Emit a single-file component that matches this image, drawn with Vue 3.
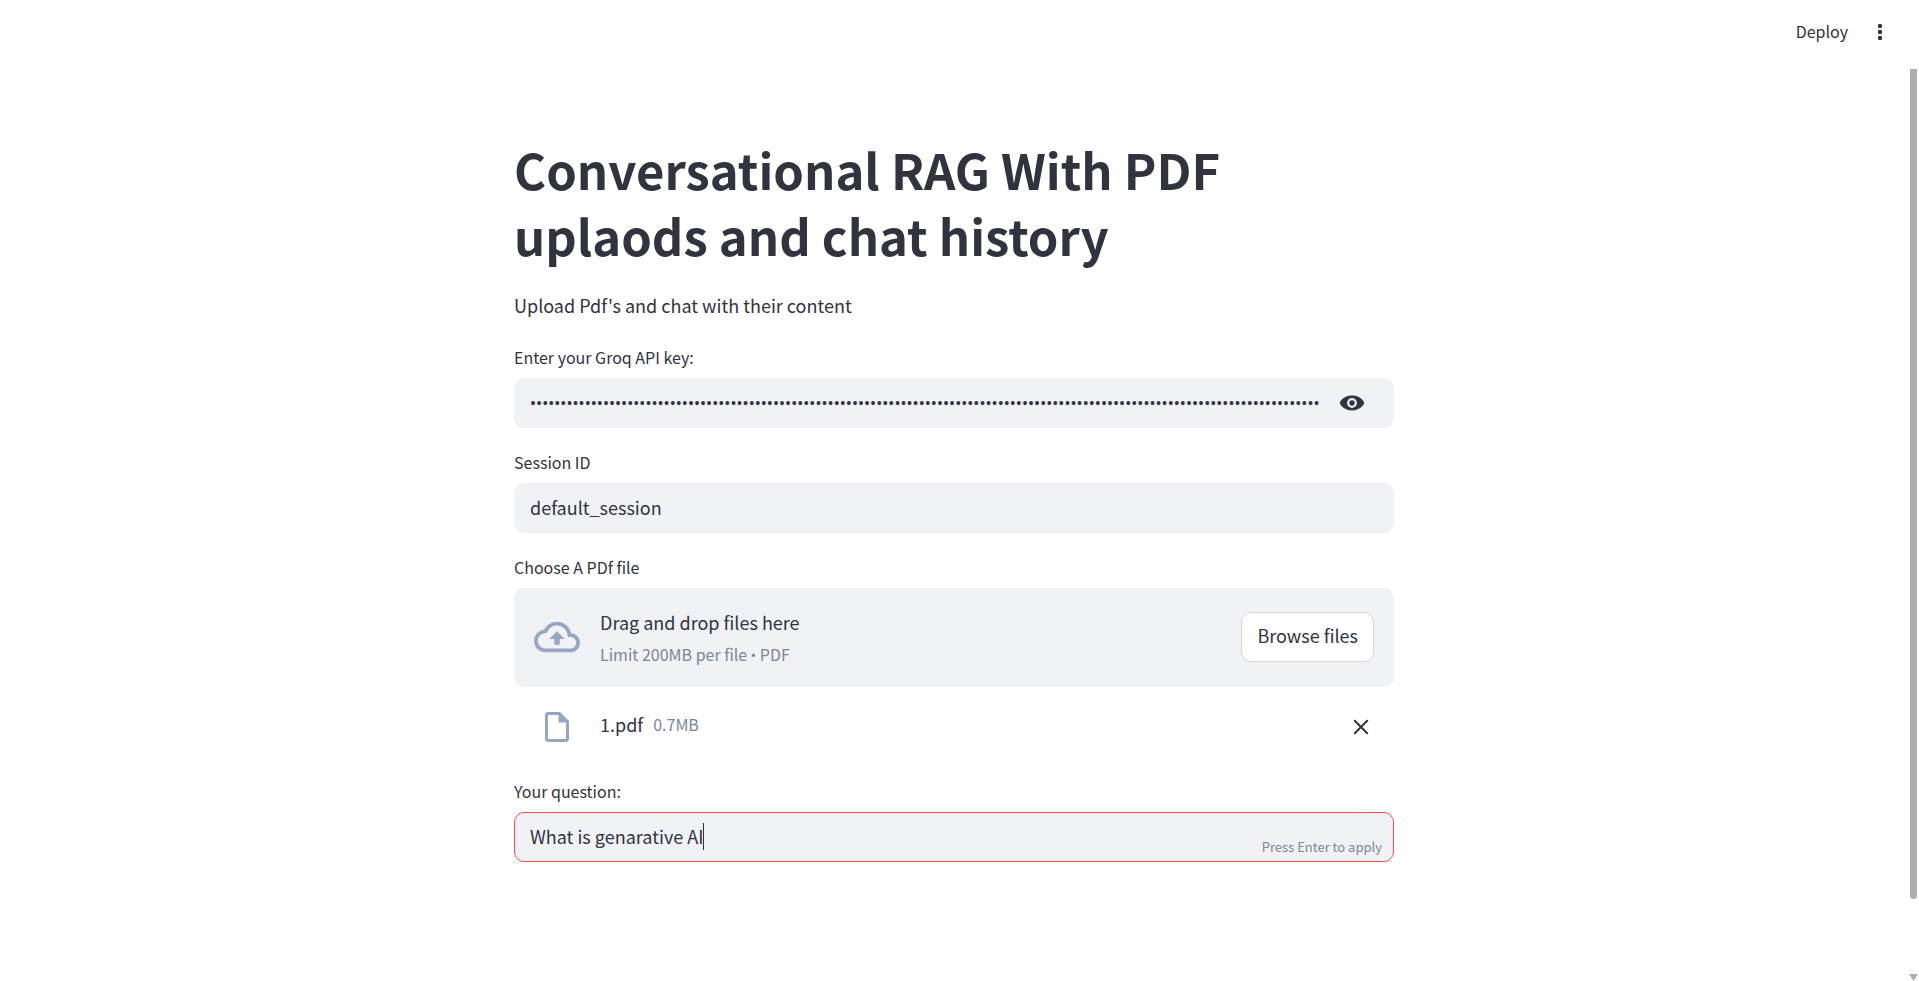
<script setup>
import { ref } from 'vue'

const apiKey = ref('k'.repeat(130))
const sessionId = ref('default_session')
const question = ref('What is genarative AI')
const files = ref([{ name: '1.pdf', size: '0.7MB' }])
const keyVisible = ref(false)

function removeFile(index) {
  files.value.splice(index, 1)
}
</script>

<template>
  <div class="app">
    <header class="toolbar">
      <button class="deploy" type="button">Deploy</button>
      <button class="menu" type="button" aria-label="Main menu">
        <svg width="20" height="20" viewBox="0 0 20 20">
          <circle cx="10" cy="4" r="2.2" />
          <circle cx="10" cy="10" r="2.2" />
          <circle cx="10" cy="16" r="2.2" />
        </svg>
      </button>
    </header>

    <main class="content">
      <h1>Conversational RAG With PDF uplaods and chat history</h1>
      <p class="intro">Upload Pdf's and chat with their content</p>

      <div class="group">
        <label for="api-key">Enter your Groq API key:</label>
        <div class="field">
          <input
            id="api-key"
            v-model="apiKey"
            class="secret"
            :type="keyVisible ? 'text' : 'password'"
            autocomplete="off"
          />
          <button class="reveal" type="button" aria-label="Show password text" @click="keyVisible = !keyVisible">
            <svg width="26" height="16" viewBox="0 0 26 16">
              <path
                fill-rule="evenodd"
                d="M13 .5C7.6.5 3.2 3.2 1.1 6.9a2.2 2.2 0 0 0 0 2.2C3.2 12.8 7.6 15.5 13 15.5s9.8-2.7 11.9-6.4a2.2 2.2 0 0 0 0-2.2C22.8 3.2 18.4.5 13 .5zM13 3.1a4.9 4.9 0 1 1 0 9.8 4.9 4.9 0 0 1 0-9.8z"
              />
              <circle cx="13" cy="8" r="2.7" />
            </svg>
          </button>
        </div>
      </div>

      <div class="group">
        <label for="session">Session ID</label>
        <div class="field">
          <input id="session" v-model="sessionId" type="text" />
        </div>
      </div>

      <div class="group">
        <label for="browse">Choose A PDf file</label>
        <section class="dropzone">
          <svg class="cloud" width="46" height="46" viewBox="0 0 24 24">
            <path
              d="M19.35 10.04A7.49 7.49 0 0 0 12 4C9.11 4 6.6 5.64 5.35 8.04A5.994 5.994 0 0 0 0 14c0 3.31 2.69 6 6 6h13c2.76 0 5-2.24 5-5 0-2.64-2.05-4.78-4.65-4.96zM19 18H6c-2.21 0-4-1.79-4-4 0-2.05 1.53-3.76 3.56-3.97l1.07-.11.5-.95A5.469 5.469 0 0 1 12 6c2.62 0 4.88 1.86 5.39 4.43l.3 1.5 1.53.11A2.98 2.98 0 0 1 22 15c0 1.65-1.35 3-3 3zM8 13h2.55v3h2.9v-3H16l-4-4z"
            />
          </svg>
          <div class="instructions">
            <span>Drag and drop files here</span>
            <span class="limit">Limit 200MB per file <span class="dot">•</span> PDF</span>
          </div>
          <button id="browse" class="browse" type="button">Browse files</button>
        </section>
        <ul class="files">
          <li v-for="(file, index) in files" :key="file.name">
            <svg class="sheet" width="36" height="36" viewBox="0 0 24 24">
              <path
                d="M14 2H6c-1.1 0-1.99.9-1.99 2L4 20c0 1.1.89 2 1.99 2H18c1.1 0 2-.9 2-2V8l-6-6zM6 20V4h7v5h5v11H6z"
              />
            </svg>
            <div class="file-info">
              <span>{{ file.name }}</span>
              <span class="file-size">{{ file.size }}</span>
            </div>
            <button class="remove" type="button" :aria-label="'Remove ' + file.name" @click="removeFile(index)">
              <svg width="16" height="16" viewBox="0 0 16 16">
                <path d="M1.8 1.8l12.4 12.4M14.2 1.8L1.8 14.2" />
              </svg>
            </button>
          </li>
        </ul>
      </div>

      <div class="group">
        <label for="question">Your question:</label>
        <div class="field active">
          <input id="question" v-model="question" type="text" />
          <span class="caret"></span>
          <span class="hint">Press Enter to apply</span>
        </div>
      </div>
    </main>

    <div class="rail" aria-hidden="true">
      <div class="thumb"></div>
      <div class="arrow"></div>
    </div>
  </div>
</template>

<style>
body {
  background: #fff;
}
</style>

<style scoped>
.app {
  position: relative;
  min-height: 100vh;
  padding-right: 11px;
  color: #31333f;
  font-family: "Noto Sans CJK SC", "Noto Sans", sans-serif;
  font-size: 18px;
  line-height: 30px;
}

.app *,
.app {
  box-sizing: border-box;
}

button {
  margin: 0;
  padding: 0;
  border: 0;
  background: none;
  color: inherit;
  font: inherit;
  cursor: pointer;
}

svg {
  display: block;
  fill: currentColor;
}

.toolbar {
  display: flex;
  align-items: center;
  justify-content: flex-end;
  gap: 22px;
  height: 63px;
  padding-right: 18px;
}

.deploy {
  padding-bottom: 2px;
  font-size: 16px;
}

.content {
  max-width: 880px;
  margin: 0 auto;
  padding: 73px 0 80px;
}

h1 {
  margin: 0;
  font-size: 49px;
  font-weight: 700;
  line-height: 66px;
}

.intro {
  margin: 22px 0 23px;
}

.group {
  margin-bottom: 20px;
}

label {
  display: block;
  margin-bottom: 7px;
  font-size: 16px;
  line-height: 28px;
}

.field {
  position: relative;
  display: flex;
  align-items: center;
  height: 50px;
  border: 1px solid #f0f2f6;
  border-radius: 10px;
  background: #f0f2f6;
}

.field.active {
  border-color: #ff4b4b;
}

input {
  flex: 1;
  min-width: 0;
  height: 48px;
  padding: 0 15px 3px;
  border: 0;
  outline: 0;
  background: none;
  color: inherit;
  font: inherit;
}

.secret {
  padding: 0 0 0 15px;
  font-family: Roboto, sans-serif;
}

.reveal {
  margin: 0 28px 0 16px;
}

.caret {
  position: absolute;
  left: 188px;
  top: 10px;
  width: 1px;
  height: 27px;
  background: #31333f;
}

.hint {
  position: absolute;
  right: 11px;
  bottom: 4px;
  color: #808495;
  font-size: 13px;
  line-height: 20px;
}

.dropzone {
  display: flex;
  align-items: center;
  gap: 20px;
  height: 99px;
  padding: 0 20px 2px;
  border-radius: 10px;
  background: #f0f2f6;
}

.cloud,
.sheet {
  color: #97a6c3;
}

.instructions {
  display: flex;
  flex: 1;
  flex-direction: column;
  gap: 2px;
  padding-top: 3px;
}

.limit,
.file-size {
  color: #808495;
  font-size: 16px;
}

.dot {
  font-family: Roboto, sans-serif;
  line-height: 20px;
}

.browse {
  height: 50px;
  padding: 0 15px 3px;
  border: 1px solid #d6d6d9;
  border-radius: 10px;
  background: #fff;
}

.files {
  margin: 0;
  padding: 20px 20px 10px;
  list-style: none;
}

.files li {
  display: flex;
  align-items: center;
  height: 40px;
}

.sheet {
  margin: 0 25px 0 5px;
}

.file-info {
  display: flex;
  flex: 1;
  gap: 10px;
  padding-bottom: 7px;
}

.remove {
  margin-right: 5px;
}

.remove svg {
  fill: none;
  stroke: currentColor;
  stroke-width: 2;
  stroke-linecap: round;
}

.rail {
  position: absolute;
  top: 69px;
  right: 1px;
  bottom: 0;
  display: flex;
  flex-direction: column;
  align-items: center;
  justify-content: space-between;
  width: 9px;
}

.thumb {
  width: 7px;
  height: 91%;
  border-radius: 0 0 4px 4px;
  background: #adadb2;
}

.arrow {
  width: 9px;
  height: 7px;
  background: #adadb2;
  clip-path: polygon(0 0, 100% 0, 50% 100%);
}
</style>
